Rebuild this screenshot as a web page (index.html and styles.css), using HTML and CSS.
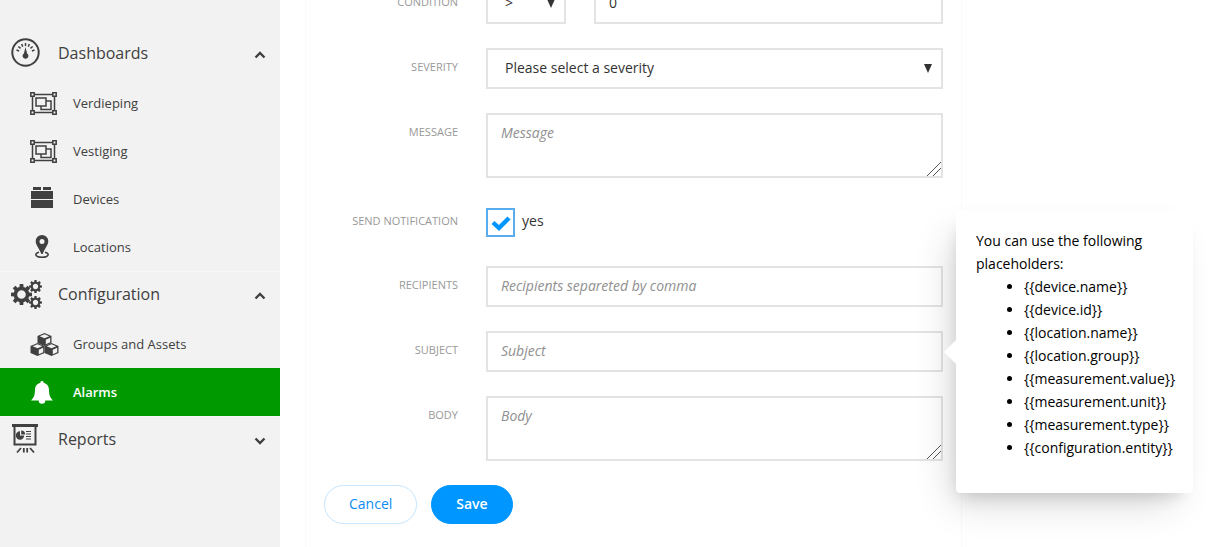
FILE: index.html
```html
<!DOCTYPE html>
<html lang="en">
<head>
<meta charset="utf-8">
<title>Alarms</title>
<link rel="stylesheet" href="styles.css">
</head>
<body>

<!-- Icon shapes that are used more than once -->
<svg class="sprite" aria-hidden="true">
	<symbol id="group" viewBox="0 0 27 23">
		<g fill="none" stroke="currentColor" stroke-width="1.5">
			<path d="M4 2.500h19M4 20.500h19M2.500 4v15M24.500 4v15"/>
			<path d="M.8.8h3.400v3.400H.8zM22.800.8h3.400v3.400h-3.400zM.8 18.800h3.400v3.400H.8zM22.800 18.800h3.400v3.400h-3.400z"/>
			<path d="M6 6h10v8H6zM16 9h5v8.500H11V14"/>
		</g>
	</symbol>
	<symbol id="up" viewBox="0 0 12 8">
		<path d="M1.500 6.500L6 2l4.500 4.500" fill="none" stroke="currentColor" stroke-width="2.400"/>
	</symbol>
	<symbol id="gear" viewBox="-10 -10 20 20">
		<path fill="none" stroke="currentColor" stroke-width="3.400" d="M0-5.800a5.800 5.800 0 1 1 0 11.600a5.800 5.800 0 1 1 0-11.600"/>
		<path id="tooth" fill="currentColor" d="M-2-6.500L-1.700-10h3.400L2-6.500zM-2 6.500L-1.700 10h3.400L2 6.500zM-6.500-2L-10-1.700v3.400L-6.500 2zM6.500-2L10-1.700v3.400L6.500 2z"/>
		<use href="#tooth" transform="rotate(45)"/>
	</symbol>
	<symbol id="cube" viewBox="0 0 15 13">
		<path fill="currentColor" d="M7.500 0L14.500 3v7l-7 3l-7-3V3z"/>
		<path class="cut" d="M7.500 1.300L12.300 3.300L7.500 5.300L2.700 3.300zM8.800 6.800l4.400-2v4.500l-4.400 2z"/>
	</symbol>
</svg>

<div class="page">
	<nav class="sidebar">
		<a class="section" href="#dashboards">
			<svg class="icon" width="30" height="30" viewBox="0 0 30 30">
				<circle cx="14.500" cy="14.500" r="13.200" fill="none" stroke="currentColor" stroke-width="2"/>
				<path d="M5.500 12l2.600 1M7.300 8.500l2.300 1.900M10.700 6l1 2.800M14.500 5v3M18.300 6l-1 2.800M21.700 8.500l-2.300 1.900M23.500 12l-2.600 1" stroke="currentColor" stroke-width="1.500"/>
				<path d="M14.500 9l1.600 6.500a2.900 2.900 0 1 1-3.200 0z" fill="currentColor"/>
			</svg>
			<span>Dashboards</span>
			<svg class="chevron" width="12" height="8"><use href="#up"/></svg>
		</a>
		<ul>
			<li><a href="#verdieping"><svg class="icon" width="27" height="23"><use href="#group"/></svg>Verdieping</a></li>
			<li><a href="#vestiging"><svg class="icon" width="27" height="23"><use href="#group"/></svg>Vestiging</a></li>
			<li><a href="#devices">
				<svg class="icon" width="23" height="24" viewBox="0 0 23 24"><path d="M3 0h8v3H3zM13 0h8v3h-8zM1 4h22v8H1zM1 13h22v8H1z" fill="currentColor"/></svg>
				Devices</a></li>
			<li><a href="#locations">
				<svg class="icon" width="23" height="25" viewBox="0 0 23 25">
					<path fill="currentColor" fill-rule="evenodd" d="M12 0a6.300 6.300 0 0 1 6.300 6.300C18.300 10 15 13 12.700 19h-1.400C9 13 5.700 10 5.700 6.300A6.300 6.300 0 0 1 12 0zm0 3.900a2.500 2.500 0 1 0 0 5a2.500 2.500 0 0 0 0-5z"/>
					<path fill="none" stroke="currentColor" stroke-width="1.600" d="M9 17.300c-5 1-4 4.900 3 4.900s8-3.900 3-4.900"/>
				</svg>
				Locations</a></li>
		</ul>

		<a class="section" href="#configuration">
			<svg class="icon" width="32" height="30" viewBox="0 0 32 30">
				<use href="#gear" x="0" y="5" width="21" height="21"/>
				<use href="#gear" x="18" y="1" width="13" height="13"/>
				<use href="#gear" x="18" y="17" width="13" height="13"/>
			</svg>
			<span>Configuration</span>
			<svg class="chevron" width="12" height="8"><use href="#up"/></svg>
		</a>
		<ul>
			<li><a href="#groups">
				<svg class="icon" width="29" height="25" viewBox="0 0 29 25">
					<use href="#cube" x="7" y="1" width="15" height="13"/>
					<use href="#cube" x="0" y="11" width="15" height="13"/>
					<use href="#cube" x="14" y="11" width="15" height="13"/>
				</svg>
				Groups and Assets</a></li>
			<li class="active"><a href="#alarms">
				<svg class="icon" width="23" height="25" viewBox="0 0 23 25">
					<path fill="currentColor" d="M12 1c1 0 1.600.7 1.600 1.700C17 3.500 19 6.300 19 10c0 5.500 1.500 8 4 10.500H15.300a3.300 3.300 0 0 1-6.600 0H1C3.500 18 5 15.500 5 10c0-3.700 2-6.500 5.400-7.300C10.400 1.700 11 1 12 1z"/>
				</svg>
				Alarms</a></li>
		</ul>

		<a class="section" href="#reports">
			<svg class="icon" width="29" height="30" viewBox="0 0 29 30">
				<path fill="currentColor" d="M1 0h26v3H1z"/>
				<path fill="none" stroke="currentColor" stroke-width="2" d="M3.500 2v18.500h21V2"/>
				<path stroke="currentColor" stroke-width="1.800" d="M10 24l-4 4.500M12.800 24v4.500M16.200 24v4.500M19 24l4 4.500"/>
				<path stroke="currentColor" d="M15 7.500h5M15 10h5M15 12.500h5M15 15h5"/>
				<path fill="currentColor" d="M9 7.300v4.200h4.200a4.200 4.200 0 1 1-4.200-4.200zM10.200 6.500a3.900 3.900 0 0 1 3.900 3.900h-3.900z"/>
			</svg>
			<span>Reports</span>
			<svg class="chevron down" width="12" height="8"><use href="#up"/></svg>
		</a>
	</nav>

	<main>
		<form class="panel">
			<div class="row">
				<label for="condition">Condition</label>
				<div class="field split">
					<div class="select">
						<select id="condition"><option>&gt;</option></select>
						<svg class="arrow" width="8" height="9" viewBox="0 0 8 9"><path d="M0 0h8L4 9z" fill="currentColor"/></svg>
					</div>
					<input type="text" value="0" aria-label="Threshold">
				</div>
			</div>
			<div class="row">
				<label for="severity">Severity</label>
				<div class="field select">
					<select id="severity"><option>Please select a severity</option></select>
					<svg class="arrow" width="8" height="9" viewBox="0 0 8 9"><path d="M0 0h8L4 9z" fill="currentColor"/></svg>
				</div>
			</div>
			<div class="row">
				<label for="message">Message</label>
				<div class="field"><textarea id="message" placeholder="Message"></textarea></div>
			</div>
			<div class="row">
				<label for="notify">Send notification</label>
				<div class="field check">
					<span class="box">
						<input type="checkbox" id="notify" checked>
						<svg width="29" height="29" viewBox="0 0 29 29"><path d="M7 14.500l6 5.500l10-10" fill="none" stroke="#0096ff" stroke-width="4.400"/></svg>
					</span>
					<label class="yes" for="notify">yes</label>
				</div>
			</div>
			<div class="row">
				<label for="recipients">Recipients</label>
				<div class="field"><input type="text" id="recipients" placeholder="Recipients separeted by comma"></div>
			</div>
			<div class="row">
				<label for="subject">Subject</label>
				<div class="field">
					<input type="text" id="subject" placeholder="Subject">
					<div class="tooltip" role="tooltip">
						<p>You can use the following placeholders:</p>
						<ul>
							<li>{{device.name}}</li>
							<li>{{device.id}}</li>
							<li>{{location.name}}</li>
							<li>{{location.group}}</li>
							<li>{{measurement.value}}</li>
							<li>{{measurement.unit}}</li>
							<li>{{measurement.type}}</li>
							<li>{{configuration.entity}}</li>
						</ul>
					</div>
				</div>
			</div>
			<div class="row">
				<label for="body">Body</label>
				<div class="field"><textarea id="body" placeholder="Body"></textarea></div>
			</div>
			<div class="buttons">
				<button type="button" class="cancel">Cancel</button>
				<button type="submit" class="save">Save</button>
			</div>
		</form>
	</main>
</div>

</body>
</html>
```
FILE: styles.css
```css
* {
	box-sizing: border-box;
}
body {
	margin: 0;
	background: #fff;
	color: #333;
	font-family: "Open Sans", "Noto Sans", sans-serif;
	font-size: 14px;
}
ul, p {
	margin: 0;
	padding: 0;
}
.sprite {
	position: absolute;
	width: 0;
	height: 0;
}
.page {
	display: flex;
	min-height: 100vh;
	overflow: hidden;
}

/* Sidebar */
.sidebar {
	flex: 0 0 280px;
	padding-top: 30px;
	background: #f2f2f2;
}
.sidebar ul {
	list-style: none;
}
.sidebar a {
	display: grid;
	align-items: center;
	color: #404040;
	text-decoration: none;
}
.sidebar li a {
	grid-template-columns: 43px 1fr;
	height: 48px;
	padding-left: 30px;
	font-size: 13px;
}
.sidebar a.section {
	grid-template-columns: 47px 1fr 12px;
	height: 49px;
	padding: 0 14px 3px 11px;
	font-size: 16px;
}
.sidebar ul + .section {
	box-shadow: inset 0 1px #f7f7f7;
}
.sidebar .active {
	background: #090;
}
.sidebar .active a {
	color: #fff;
	font-weight: 600;
}
.chevron {
	margin-top: 3px;
}
.cut {
	fill: #f2f2f2;
}
.down {
	transform: rotate(180deg);
}

/* Form */
main {
	display: flex;
	flex: 1;
	min-width: 0;
	padding-left: 25px;
}
.panel {
	flex: 0 1 657px;
	margin-top: -17px;
	padding: 0 18px;
	border: 1px solid #f9f9f9;
	border-width: 0 1px;
}
.row {
	display: grid;
	grid-template-columns: 134px 1fr;
	column-gap: 28px;
	margin-bottom: 24px;
}
.row > label {
	padding-top: 11px;
	color: #999;
	font-size: 11px;
	font-weight: 500;
	line-height: 16px;
	text-align: right;
	text-transform: uppercase;
}
.field {
	position: relative;
	min-width: 0;
}
.split {
	display: grid;
	grid-template-columns: 80px 1fr;
	gap: 28px;
}
input[type=text], select, textarea {
	display: block;
	width: 100%;
	height: 41px;
	padding: 0 13px 2px;
	border: 2px solid #e3e3e3;
	border-radius: 0;
	background: #fff;
	color: #333;
	font: inherit;
}
select {
	appearance: none;
	padding-left: 17px;
}
textarea {
	height: 65px;
	padding: 8px 13px;
}
textarea::-webkit-resizer {
	background: linear-gradient(135deg, transparent 11px, #555 11px, #555 12px, transparent 12px, transparent 15px, #555 15px, #555 16px, transparent 16px);
}
::placeholder {
	color: #909090;
	font-style: italic;
	opacity: 1;
}
.select {
	position: relative;
}
.arrow {
	position: absolute;
	right: 11px;
	top: 16px;
	pointer-events: none;
}
.check {
	display: flex;
	align-items: center;
	gap: 7px;
	height: 40px;
}
.yes {
	padding-bottom: 3px;
}
.box {
	display: grid;
}
.box > * {
	grid-area: 1 / 1;
}
.box svg {
	pointer-events: none;
}
.box input {
	appearance: none;
	width: 29px;
	height: 29px;
	margin: 0;
	border: 2px solid #5aacec;
}
.box input:not(:checked) + svg {
	visibility: hidden;
}
.buttons {
	display: flex;
	gap: 14px;
	padding-bottom: 24px;
}
button {
	height: 39px;
	padding: 0 24px 2px;
	border: 1px solid #0096ff;
	border-radius: 20px;
	background: #0096ff;
	color: #fff;
	font: 600 14px "Open Sans", "Noto Sans", sans-serif;
}
.cancel {
	border-color: #c4e6ff;
	background: #fff;
	color: #0b8bf5;
	font-weight: 400;
}

/* Placeholder help */
.tooltip {
	position: absolute;
	left: calc(100% + 13px);
	top: 50%;
	width: 237px;
	padding: 18px 18px 34px 20px;
	transform: translateY(-50%);
	border-radius: 4px;
	background: #fff;
	box-shadow: -12px 18px 36px -8px rgba(0, 0, 0, .16), -4px 10px 16px -8px rgba(0, 0, 0, .16);
	color: #000;
	line-height: 23px;
	z-index: 1;
}
.tooltip::before {
	content: "";
	position: absolute;
	right: 100%;
	top: 50%;
	margin-top: -12px;
	border: 12px solid transparent;
	border-left-width: 0;
	border-right-color: #fff;
}
.tooltip ul {
	padding-left: 48px;
}
```
